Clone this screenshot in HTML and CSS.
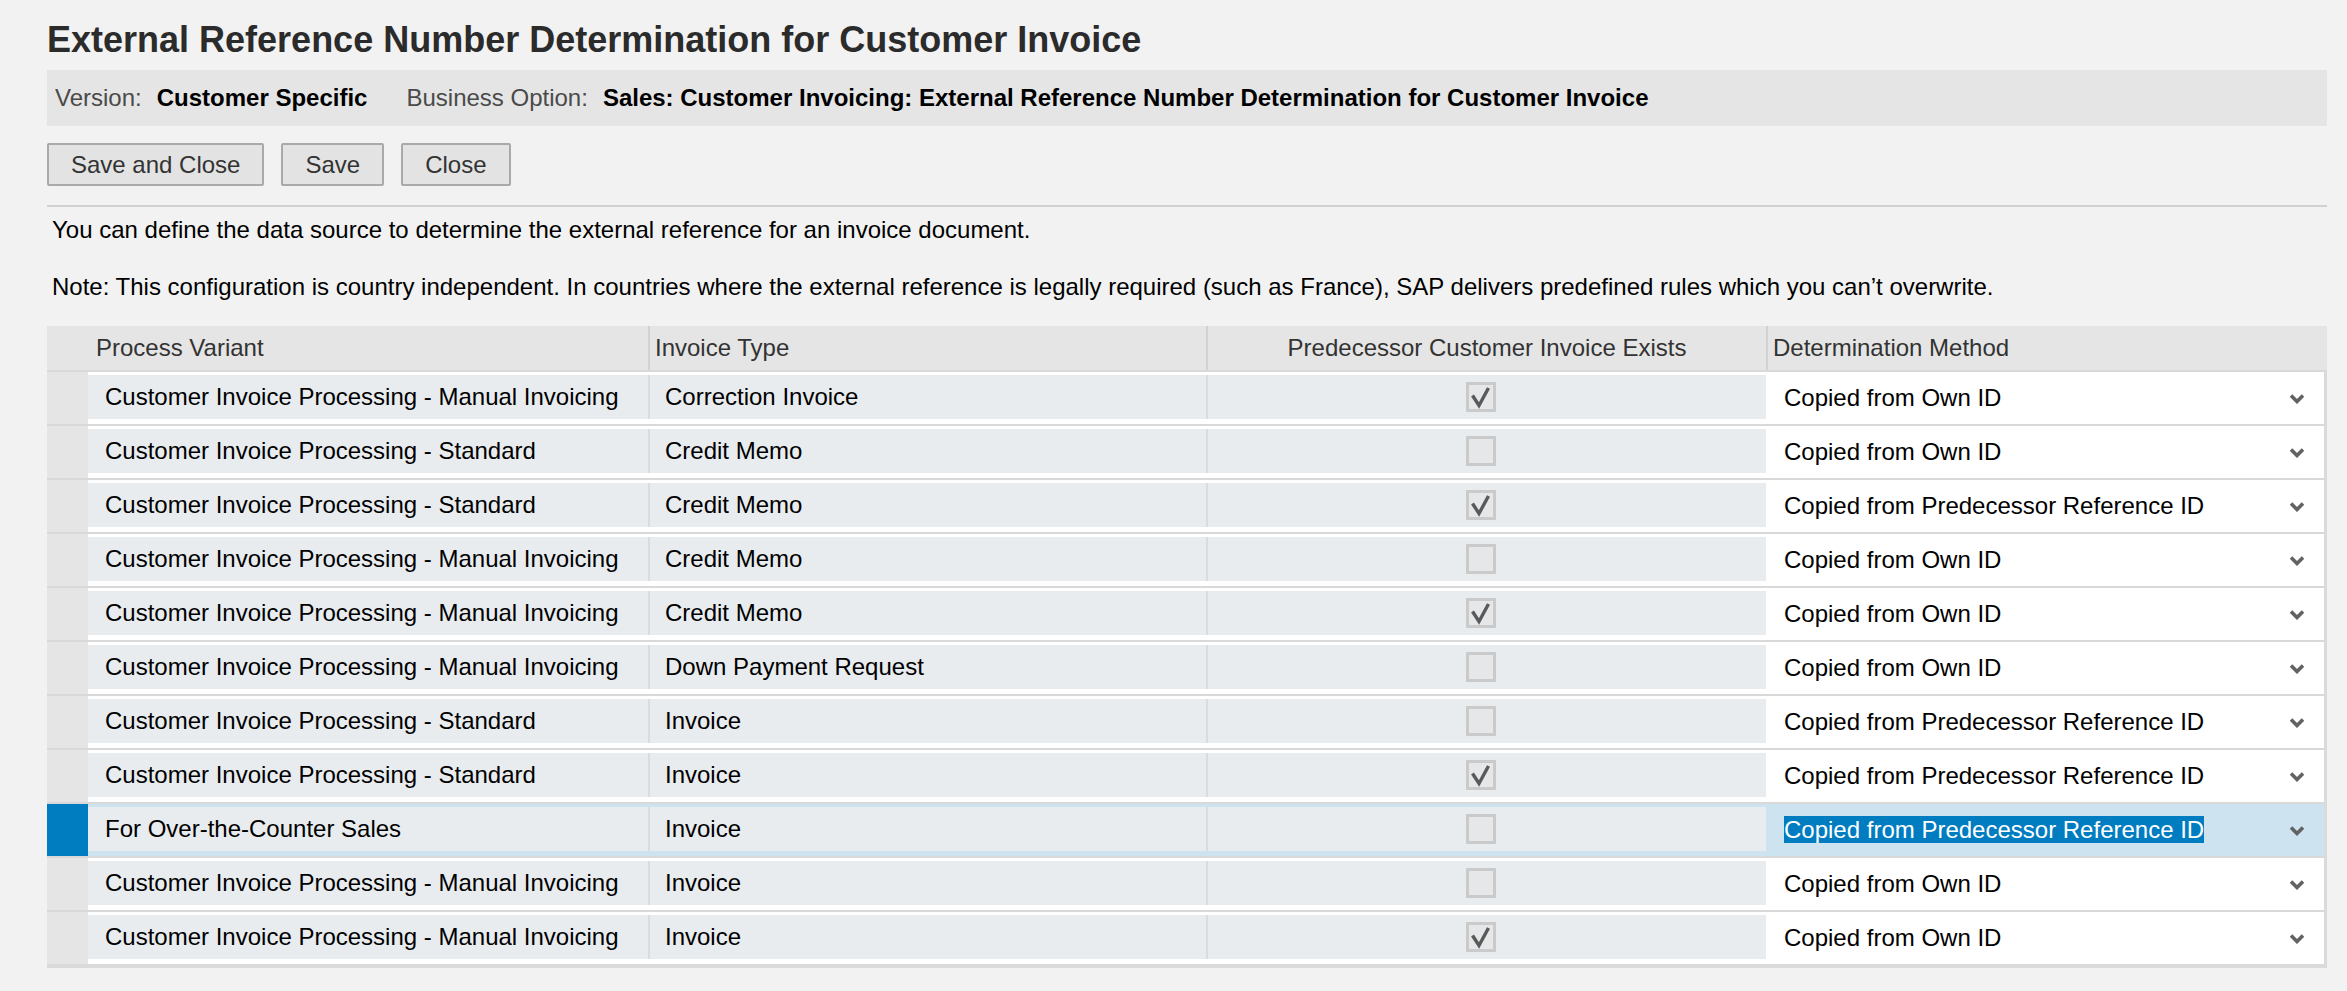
FILE: index.html
```html
<!DOCTYPE html>
<html lang="en">
<head>
    <meta charset="UTF-8">
    <title>External Reference Number Determination for Customer Invoice</title>
    <link rel="stylesheet" href="styles.css">
</head>
<body>
<div class="page">
    <h1 class="title">External Reference Number Determination for Customer Invoice</h1>

    <div class="infobar">
        <span class="lbl">Version:</span>
        <span class="val">Customer Specific</span>
        <span class="lbl">Business Option:</span>
        <span class="val">Sales: Customer Invoicing: External Reference Number Determination for Customer Invoice</span>
    </div>

    <div class="toolbar">
        <a href="javascript:;" class="btn">Save and Close</a>
        <a href="javascript:;" class="btn">Save</a>
        <a href="javascript:;" class="btn">Close</a>
    </div>

    <div class="sep"></div>

    <p class="desc">You can define the data source to determine the external reference for an invoice document.</p>
    <p class="note">Note: This configuration is country independent. In countries where the external reference is legally required (such as France), SAP delivers predefined rules which you can’t overwrite.</p>

    <div class="list">
        <div class="head">
            <div class="sel"></div>
            <div class="hc">Process Variant</div>
            <div class="hc bl">Invoice Type</div>
            <div class="hc bl center">Predecessor Customer Invoice Exists</div>
            <div class="hc bl">Determination Method</div>
        </div>
        <div id="rows"></div>
    </div>
</div>

<script>
    //表格数据: 流程变量, 发票类型, 是否存在前置发票, 确定方法
    var data = [
        ['Customer Invoice Processing - Manual Invoicing', 'Correction Invoice', true, 'Copied from Own ID'],
        ['Customer Invoice Processing - Standard', 'Credit Memo', false, 'Copied from Own ID'],
        ['Customer Invoice Processing - Standard', 'Credit Memo', true, 'Copied from Predecessor Reference ID'],
        ['Customer Invoice Processing - Manual Invoicing', 'Credit Memo', false, 'Copied from Own ID'],
        ['Customer Invoice Processing - Manual Invoicing', 'Credit Memo', true, 'Copied from Own ID'],
        ['Customer Invoice Processing - Manual Invoicing', 'Down Payment Request', false, 'Copied from Own ID'],
        ['Customer Invoice Processing - Standard', 'Invoice', false, 'Copied from Predecessor Reference ID'],
        ['Customer Invoice Processing - Standard', 'Invoice', true, 'Copied from Predecessor Reference ID'],
        ['For Over-the-Counter Sales', 'Invoice', false, 'Copied from Predecessor Reference ID'],
        ['Customer Invoice Processing - Manual Invoicing', 'Invoice', false, 'Copied from Own ID'],
        ['Customer Invoice Processing - Manual Invoicing', 'Invoice', true, 'Copied from Own ID']
    ];
    //当前选中的行
    var selected = 8;

    var tick = '<svg width="24" height="24" viewBox="0 0 24 24"><polyline points="3.5,10.5 10,20.5 19.5,3" fill="none" stroke="#5a5a5a" stroke-width="3.4"/></svg>';
    var arrow = '<svg class="arrow" width="14" height="10" viewBox="0 0 14 10"><path d="M1 1.5 L7 7.5 L13 1.5" fill="none" stroke="#626262" stroke-width="3.6"/></svg>';

    var html = '';
    for (var i = 0; i < data.length; i++) {
        var d = data[i];
        var text = d[3];
        if (i == selected) {
            text = '<span class="hl">' + text + '</span>';
        }
        html += '<div class="row' + (i == selected ? ' active' : '') + '">'
            + '<div class="sel"></div>'
            + '<div class="cell"><div class="box">' + d[0] + '</div></div>'
            + '<div class="cell"><div class="box bl">' + d[1] + '</div></div>'
            + '<div class="cell"><div class="box bl center"><span class="check">' + (d[2] ? tick : '') + '</span></div></div>'
            + '<div class="dd"><span>' + text + '</span>' + arrow + '</div>'
            + '</div>';
    }
    document.getElementById('rows').innerHTML = html;
</script>
</body>
</html>
```

FILE: styles.css
```css
body{
	margin: 0;
	background: #f2f2f2;
	font-family: "Liberation Sans", Arial, sans-serif;
	font-size: 24px;
	color: #000;
}
h1,p{
	margin: 0;
}
a{
	text-decoration: none;
}

.page{
	width: 2280px;
	margin-left: 47px;
}
.title{
	margin-top: 19px;
	font-size: 36px;
	line-height: 41px;
	font-weight: bold;
	color: #2b2b2b;
}

.infobar{
	display: flex;
	margin-top: 10px;
	height: 56px;
	line-height: 56px;
	padding-left: 8px;
	background: #e5e5e5;
	white-space: nowrap;
}
.infobar .lbl{
	color: #4a4a4a;
	margin-right: 15px;
}
.infobar .val{
	font-weight: bold;
	margin-right: 39px;
}

.toolbar{
	display: flex;
	margin-top: 17px;
}
.btn{
	display: block;
	height: 43px;
	line-height: 39px;
	padding: 0 22px;
	margin-right: 17px;
	box-sizing: border-box;
	border: 2px solid #a9a9a9;
	border-radius: 2px;
	background: #e3e3e3;
	color: #333;
}

.sep{
	margin-top: 19px;
	height: 2px;
	background: #d0d0d0;
}
.desc,.note{
	line-height: 28px;
	padding-left: 5px;
}
.desc{
	margin-top: 9px;
}
.note{
	margin-top: 29px;
}

.list{
	margin-top: 25px;
}
.head,.row{
	display: grid;
	grid-template-columns: 41px 560px 558px 560px 1fr;
}
.head{
	height: 44px;
	line-height: 44px;
	background: #e5e5e5;
	color: #333;
}
.hc{
	padding-left: 8px;
	white-space: nowrap;
}
.hc.bl{
	border-left: 2px solid #d2d2d2;
	padding-left: 5px;
}
.hc.center{
	text-align: center;
	padding-left: 0;
}

#rows{
	border-right: 3px solid #dadada;
	border-bottom: 4px solid #dadada;
}
.row{
	height: 54px;
	box-sizing: border-box;
	border-top: 2px solid #d9d9d9;
	background: #fff;
}
.row .sel{
	background: #e5e5e5;
}
.cell{
	padding: 3px 0 5px;
}
.box{
	height: 100%;
	display: flex;
	align-items: center;
	padding-left: 17px;
	background: #e9ecef;
	white-space: nowrap;
}
.box.bl{
	border-left: 2px solid #dcdcdc;
	padding-left: 15px;
}
.box.center{
	justify-content: center;
	padding-left: 0;
	padding-right: 12px;
}
.check{
	display: block;
	width: 24px;
	height: 24px;
	border: 3px solid #cacaca;
	background: #e6e7e9;
}
.check svg{
	display: block;
}
.dd{
	display: flex;
	align-items: center;
	justify-content: space-between;
	padding: 0 20px 0 18px;
	background: #fff;
	white-space: nowrap;
}
.arrow{
	display: block;
	margin-top: 2px;
}

.row.active{
	background: #cde3f0;
}
.row.active .sel{
	background: #007cc0;
}
.row.active .dd{
	background: #cde3f0;
}
.hl{
	background: #007cc0;
	color: #fff;
}
```
